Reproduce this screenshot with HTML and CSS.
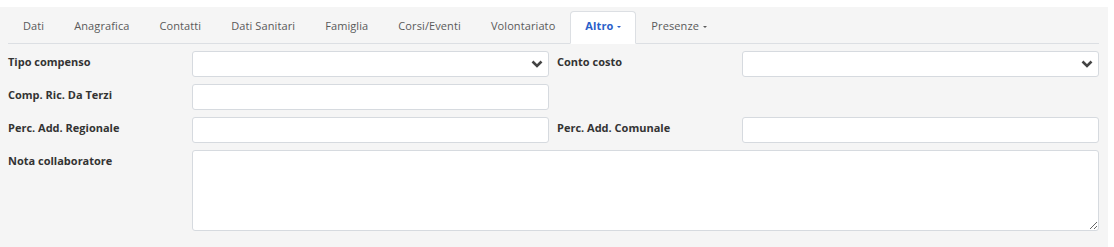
FILE: index.html
```html
<!DOCTYPE html>
<html lang="it">
<head>
    <meta charset="UTF-8">
    <title>Scheda collaboratore</title>
    <link rel="stylesheet" href="styles.css">
</head>
<body>
    <div class="panel">
        <ul class="nav-tabs">
            <li><a href="#">Dati</a></li>
            <li><a href="#">Anagrafica</a></li>
            <li><a href="#">Contatti</a></li>
            <li><a href="#">Dati Sanitari</a></li>
            <li><a href="#">Famiglia</a></li>
            <li><a href="#">Corsi/Eventi</a></li>
            <li><a href="#">Volontariato</a></li>
            <li class="active"><a href="#">Altro <span class="caret"></span></a></li>
            <li><a href="#">Presenze <span class="caret"></span></a></li>
        </ul>

        <form class="form-grid">
            <label>Tipo compenso</label>
            <select class="field"><option></option></select>
            <label>Conto costo</label>
            <select class="field"><option></option></select>

            <label>Comp. Ric. Da Terzi</label>
            <input class="field" type="text">
            <span></span>
            <span></span>

            <label>Perc. Add. Regionale</label>
            <input class="field" type="text">
            <label>Perc. Add. Comunale</label>
            <input class="field" type="text">

            <label>Nota collaboratore</label>
            <textarea class="field wide"></textarea>
        </form>
    </div>
</body>
</html>
```

FILE: styles.css
```css
* {
    margin: 0;
    padding: 0;
    box-sizing: border-box;
}

body {
    font-family: 'Open Sans', 'Liberation Sans', sans-serif;
    font-size: 11px;
    background-color: #fff;
    color: #333;
}

/* Pannello grigio */
.panel {
    margin-top: 7px;
    width: 1108px;
    height: 240px;
    padding: 4px 8px 0 8px;
    background-color: #f5f5f5;
}

/* Schede */
.nav-tabs {
    list-style: none;
    display: flex;
    width: 1091px;
    border-bottom: 1px solid #dcdfe3;
}

.nav-tabs li {
    margin-bottom: -1px;
}

.nav-tabs a {
    display: block;
    padding: 6px 14px 9px 14px;
    line-height: 16px;
    letter-spacing: 0.1px;
    border: 1px solid transparent;
    border-radius: 4px 4px 0 0;
    color: #5a5a5a;
    text-decoration: none;
}

.nav-tabs .active a {
    background-color: #fff;
    border-color: #dcdfe3;
    border-bottom-color: transparent;
    color: #2a5fc9;
    font-weight: bold;
}

.caret {
    display: inline-block;
    width: 0;
    height: 0;
    margin-left: 1px;
    vertical-align: middle;
    border-top: 2px solid;
    border-left: 2.5px solid transparent;
    border-right: 2.5px solid transparent;
}

/* Form */
.form-grid {
    display: grid;
    grid-template-columns: 176px 357px 177px 357px;
    column-gap: 8px;
    row-gap: 7px;
    margin-top: 7px;
}

.form-grid label {
    font-weight: bold;
    line-height: 16px;
    padding-top: 3px;
    color: #333;
}

.field {
    height: 26px;
    width: 100%;
    border: 1px solid #d6dadf;
    border-radius: 3px;
    background-color: #fff;
    font-family: inherit;
    font-size: 11px;
    padding: 0 6px;
}

select.field {
    appearance: none;
    -webkit-appearance: none;
    background-image: url("data:image/svg+xml;utf8,<svg xmlns='http://www.w3.org/2000/svg' width='12' height='8' viewBox='0 0 12 8'><path d='M1.5 1.5 L6 6 L10.5 1.5' fill='none' stroke='%23444' stroke-width='2.6'/></svg>");
    background-repeat: no-repeat;
    background-position: right 5px center;
}

.field.wide {
    grid-column: 2 / 5;
    height: 81px;
    padding: 6px;
}
```
